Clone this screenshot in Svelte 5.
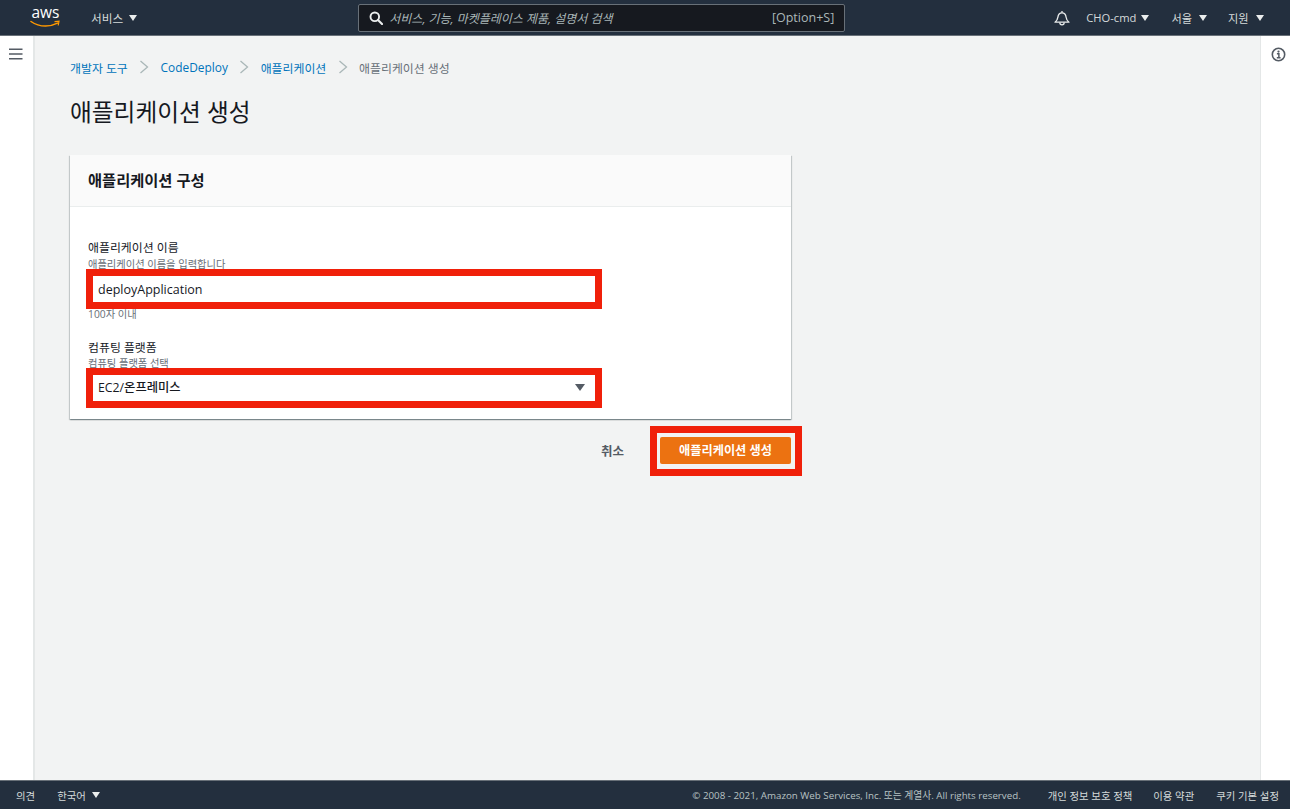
<script>
  const crumbs = ['개발자 도구', 'CodeDeploy', '애플리케이션'];
</script>

<div class="page">
  <header class="top">
    <svg class="logo" viewBox="0 -12 32 35" width="32" height="35" aria-label="aws">
      <text x="1.5" y="6.3" class="logotext" textLength="28" lengthAdjust="spacingAndGlyphs">aws</text>
      <path d="M1 9.5c4.5 3.2 9.5 4.6 14.5 4.6 4 0 8-1 12-3" fill="none" stroke="#f90" stroke-width="1.5" stroke-linecap="round"/>
      <path d="M25 9.6l4-.4-.7 3.8" fill="none" stroke="#f90" stroke-width="1.2" stroke-linecap="round"/>
    </svg>
    <span class="nav services">서비스 <i class="caret"></i></span>
    <div class="search">
      <svg class="mag" viewBox="0 0 14 14" width="14" height="14"><circle cx="5.8" cy="5.8" r="4.3" fill="none" stroke="#eaeded" stroke-width="1.9"/><path d="M9 9l4 4" stroke="#eaeded" stroke-width="2.1" stroke-linecap="round"/></svg>
      <span class="ph">서비스, 기능, 마켓플레이스 제품, 설명서 검색</span>
      <span class="hint">[Option+S]</span>
    </div>
    <svg class="bell" viewBox="0 0 16 16" width="16" height="16"><path d="M1 12.2c1.8-1.2 2.6-2.6 2.9-5C4.2 4.3 5.6 2.8 8 2.8s3.8 1.5 4.1 4.4c.3 2.4 1.1 3.8 2.9 5z" fill="none" stroke="#eaeded" stroke-width="1.3" stroke-linejoin="round"/><path d="M8 1v1.8" stroke="#eaeded" stroke-width="1.3"/><path d="M5.8 12.6a2.2 2.2 0 0 0 4.4 0" fill="none" stroke="#eaeded" stroke-width="1.3"/></svg>
    <span class="nav user">CHO-cmd <i class="caret"></i></span>
    <span class="nav region">서울 <i class="caret"></i></span>
    <span class="nav support">지원 <i class="caret"></i></span>
  </header>

  <div class="middle">
    <aside class="left">
      <svg viewBox="0 0 14 12" width="14" height="12"><path d="M0 1.2h13.5M0 6h13.5M0 10.8h13.5" stroke="#545b64" stroke-width="1.6"/></svg>
    </aside>

    <main class="content">
      <nav class="crumbs">
        {#each crumbs as c}
          <a href="#top">{c}</a>
          <svg class="sep" viewBox="0 0 10 14" width="10" height="14"><path d="M1.5 1l7 6-7 6" fill="none" stroke="#aab7b8" stroke-width="1.3"/></svg>
        {/each}
        <span class="current">애플리케이션 생성</span>
      </nav>
      <h1>애플리케이션 생성</h1>

      <section class="card">
        <h2>애플리케이션 구성</h2>
        <div class="body">
          <div class="lbl">애플리케이션 이름</div>
          <div class="desc">애플리케이션 이름을 입력합니다</div>
          <div class="field">deployApplication</div>
          <div class="constraint">100자 이내</div>
          <div class="lbl second">컴퓨팅 플랫폼</div>
          <div class="desc">컴퓨팅 플랫폼 선택</div>
          <div class="field select">EC2/온프레미스<i class="caret dark"></i></div>
        </div>
      </section>

      <div class="actions">
        <span class="cancel">취소</span>
        <span class="highlight"><span class="primary">애플리케이션 생성</span></span>
      </div>
    </main>

    <aside class="right">
      <svg viewBox="0 0 16 16" width="15" height="15"><circle cx="8" cy="8" r="6.6" fill="none" stroke="#545b64" stroke-width="1.7"/><circle cx="8" cy="4.9" r="1.2" fill="#545b64"/><path d="M6.3 7.2H8.4v4M6.2 11.4h4" fill="none" stroke="#545b64" stroke-width="1.6"/></svg>
    </aside>
  </div>

  <footer class="foot">
    <span class="feedback">의견</span>
    <span class="lang">한국어 <i class="caret"></i></span>
    <span class="copy">© 2008 - 2021, Amazon Web Services, Inc. 또는 계열사. All rights reserved.</span>
    <span class="flink privacy">개인 정보 보호 정책</span>
    <span class="flink terms">이용 약관</span>
    <span class="flink cookie">쿠키 기본 설정</span>
  </footer>
</div>

<style>
  :global(body) { margin: 0; background: #f2f3f3; }
  .page {
    width: 1290px; height: 809px; display: flex; flex-direction: column; overflow: hidden;
    font-family: "Open Sans", "Noto Sans CJK KR", sans-serif; color: #16191f; font-size: 11.5px;
  }
  .top {
    height: 35px; border-bottom: 1px solid #687078; background: #232f3e; flex: none;
    display: flex; align-items: center; color: #d5dbdb;
  }
  .logo { margin-left: 30px; flex: none; }
  .logotext { font: 500 17px "Open Sans", sans-serif; fill: #fff; }
  .nav { font-size: 11.2px; display: flex; align-items: center; gap: 5px; white-space: nowrap; }
  .services { margin-left: 29px; font-size: 11.7px; gap: 6px; }
  .caret {
    display: inline-block; width: 0; height: 0; border-left: 4.5px solid transparent; border-right: 4.5px solid transparent;
    border-top: 6.5px solid #eaeded;
  }
  .search {
    margin-left: 221px; width: 485px; height: 26px; flex: none; box-sizing: content-box;
    border: 1px solid #687078; border-radius: 2px; background: #16191f;
    display: flex; align-items: center;
  }
  .mag { margin-left: 10px; }
  .ph { margin-left: 6px; font-style: italic; color: #aab7b8; font-size: 12px; white-space: nowrap; }
  .hint { margin-left: auto; margin-right: 10px; color: #aab7b8; font-size: 12.5px; }
  .bell { margin-left: 209px; }
  .user { margin-left: 16px; }
  .region { margin-left: 22px; gap: 7px; }
  .support { margin-left: 21px; gap: 7px; }
  .middle { flex: 1; display: flex; min-height: 0; }
  .left {
    width: 33px; background: #fff; border-right: 2px solid #e4e7e7; flex: none; box-sizing: content-box;
    padding-top: 12px; display: block;
  }
  .left svg { display: block; margin-left: 9px; }
  .content { flex: 1; padding: 0 0 0 35px; min-width: 0; }
  .right {
    width: 29px; flex: none; background: #fff; border-left: 1px solid #e4e7e7; padding-top: 11px;
  }
  .right svg { display: block; margin-left: 10px; }
  .crumbs { display: flex; align-items: center; height: 18px; margin-top: 22px; font-size: 11.9px; }
  .crumbs a { color: #0073bb; text-decoration: none; white-space: nowrap; }
  .sep { margin: 0 11.4px; }
  .current { color: #687078; }
  h1 { font-size: 23.7px; font-weight: 400; margin: 18px 0 0; line-height: 36px; color: #16191f; }
  .card {
    width: 721px; margin-top: 25px; background: #fff; height: 264px; box-sizing: border-box;
    box-shadow: 0 1px 1px 0 rgba(0,28,36,.3), 1px 1px 1px 0 rgba(0,28,36,.15), -1px 1px 1px 0 rgba(0,28,36,.15);
  }
  h2 {
    margin: 0; height: 52px; box-sizing: border-box; background: #fafafa; border-bottom: 1px solid #eaeded;
    font-size: 15.3px; font-weight: 700; line-height: 51px; padding-left: 18px;
  }
  .body { padding: 30px 18px 0; position: relative; }
  .lbl { font-size: 11.9px; font-weight: 400; line-height: 20px; height: 20px; }
  .lbl.second { margin-top: 17px; height: 19px; }
  .desc { font-size: 10.25px; color: #687078; line-height: 12px; height: 12px; margin-top: 1px; }
  .field {
    width: 502px; height: 26px; margin: 6px 0 0 5px; padding-left: 5px; box-sizing: border-box;
    background: #fff; outline: 7px solid #f0200a; font-size: 12.5px; font-weight: 500; line-height: 28px; position: relative;
  }
  .select { font-size: 12.3px; line-height: 26px; }
  .caret.dark {
    position: absolute; right: 10px; top: 9px; border-left-width: 5px; border-right-width: 5px; border-top: 7px solid #545b64;
  }
  .constraint { font-size: 10.3px; color: #687078; margin-top: 6px; line-height: 12px; }
  .actions { width: 721px; height: 27px; margin-top: 18px; display: flex; justify-content: flex-end; align-items: center; }
  .cancel { font-size: 12.5px; font-weight: 700; color: #545b64; margin-right: 37px; }
  .highlight {
    display: block; flex: none; margin: -12px -11px; padding: 4px 4px 5px 3px; border: 7px solid #f0200a; background: #f2f3f3;
  }
  .primary {
    width: 131px; height: 27px; background: #ec7211; color: #fff; font-weight: 700; font-size: 12.2px;
    display: flex; align-items: center; justify-content: center; border-radius: 2px;
  }
  .foot {
    flex: none; height: 28px; border-top: 1px solid #687078; background: #232f3e; color: #d5dbdb; font-size: 10.4px;
    display: flex; align-items: center;
  }
  .feedback { margin-left: 16px; }
  .lang { margin-left: 22px; display: flex; align-items: center; gap: 6px; font-size: 10.4px; }
  .copy { margin-left: auto; margin-right: 27px; font-size: 9.75px; color: #b8c2c3; white-space: nowrap; }
  .flink { white-space: nowrap; }
  .terms { margin-left: 21px; }
  .cookie { margin-left: 22px; margin-right: 11px; }
</style>
